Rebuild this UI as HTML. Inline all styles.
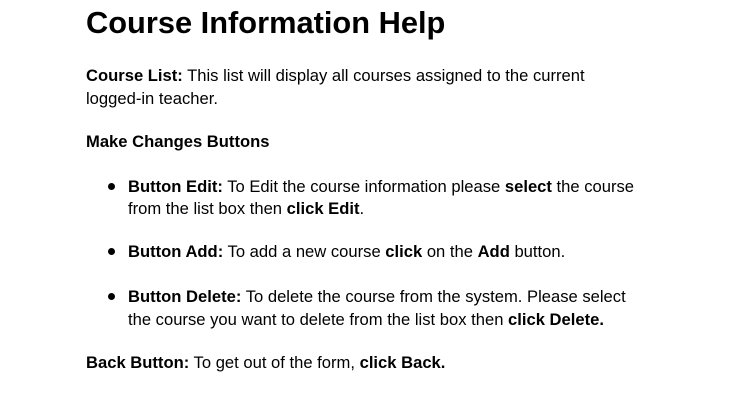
<!DOCTYPE html>
<html><head><meta charset="utf-8"><style>
body{margin:0;width:730px;height:403px;background:#fff;font-family:"Liberation Sans",Arial,sans-serif;color:#000;position:relative;overflow:hidden}
.l{position:absolute;left:86px;font-size:16.6px;line-height:23px;white-space:nowrap}
.b{left:128px}
.dot{position:absolute;left:108px;width:7px;height:7px;border-radius:50%;background:#000}
h1{position:absolute;left:86px;top:3px;margin:0;font-size:30.8px;line-height:40px;font-weight:bold}
</style></head><body>
<h1>Course Information Help</h1>
<div class="l" style="top:64px"><b>Course List:</b> This list will display all courses assigned to the current</div>
<div class="l" style="top:87px">logged-in teacher.</div>
<div class="l" style="top:130px"><b>Make Changes Buttons</b></div>
<div class="dot" style="top:183px"></div>
<div class="l b" style="top:175px"><b>Button Edit:</b> To Edit the course information please <b>select</b> the course</div>
<div class="l b" style="top:197px">from the list box then <b>click Edit</b>.</div>
<div class="dot" style="top:248px"></div>
<div class="l b" style="top:240px"><b>Button Add:</b> To add a new course <b>click</b> on the <b>Add</b> button.</div>
<div class="dot" style="top:293px"></div>
<div class="l b" style="top:285px"><b>Button Delete:</b> To delete the course from the system. Please select</div>
<div class="l b" style="top:308px">the course you want to delete from the list box then <b>click Delete.</b></div>
<div class="l" style="top:351px"><b>Back Button:</b> To get out of the form, <b>click Back.</b></div>
</body></html>
